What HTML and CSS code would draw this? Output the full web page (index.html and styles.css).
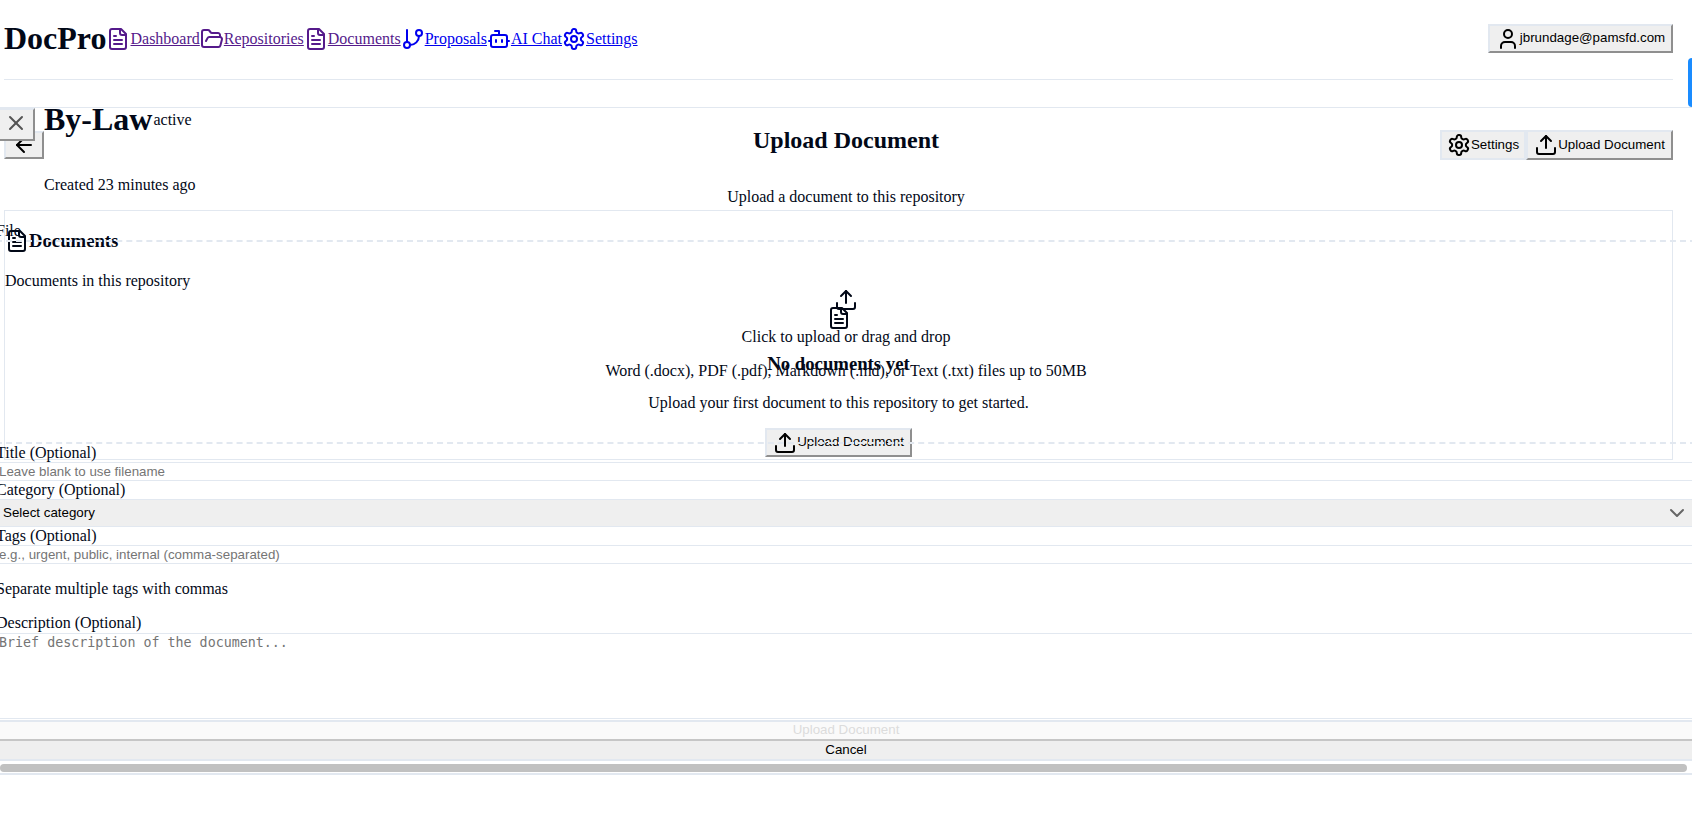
FILE: index.html
```html
<!DOCTYPE html>
<html lang="en">
<head>
  <meta charset="UTF-8" />
  <meta name="viewport" content="width=device-width, initial-scale=1.0" />
  <title>DocPro</title>
  <link rel="stylesheet" href="styles.css">
</head>
<body>
  <svg class="icon-defs" aria-hidden="true">
    <symbol id="i-file" viewBox="0 0 24 24"><path d="M15 2H6a2 2 0 0 0-2 2v16a2 2 0 0 0 2 2h12a2 2 0 0 0 2-2V7Z"/><path d="M14 2v4a2 2 0 0 0 2 2h4"/><path d="M10 9H8"/><path d="M16 13H8"/><path d="M16 17H8"/></symbol>
    <symbol id="i-folder" viewBox="0 0 24 24"><path d="m6 14 1.5-2.9A2 2 0 0 1 9.24 10H20a2 2 0 0 1 1.94 2.5l-1.54 6a2 2 0 0 1-1.95 1.5H4a2 2 0 0 1-2-2V5a2 2 0 0 1 2-2h3.9a2 2 0 0 1 1.69.9l.81 1.2a2 2 0 0 0 1.67.9H18a2 2 0 0 1 2 2v2"/></symbol>
    <symbol id="i-branch" viewBox="0 0 24 24"><line x1="6" x2="6" y1="3" y2="15"/><circle cx="18" cy="6" r="3"/><circle cx="6" cy="18" r="3"/><path d="M18 9a9 9 0 0 1-9 9"/></symbol>
    <symbol id="i-bot" viewBox="0 0 24 24"><path d="M12 8V4H8"/><rect width="16" height="12" x="4" y="8" rx="2"/><path d="M2 14h2"/><path d="M20 14h2"/><path d="M15 13v2"/><path d="M9 13v2"/></symbol>
    <symbol id="i-gear" viewBox="0 0 24 24"><path d="M12.22 2h-.44a2 2 0 0 0-2 2v.18a2 2 0 0 1-1 1.73l-.43.25a2 2 0 0 1-2 0l-.15-.08a2 2 0 0 0-2.73.73l-.22.38a2 2 0 0 0 .73 2.73l.15.1a2 2 0 0 1 1 1.72v.51a2 2 0 0 1-1 1.74l-.15.09a2 2 0 0 0-.73 2.73l.22.38a2 2 0 0 0 2.73.73l.15-.08a2 2 0 0 1 2 0l.43.25a2 2 0 0 1 1 1.73V20a2 2 0 0 0 2 2h.44a2 2 0 0 0 2-2v-.18a2 2 0 0 1 1-1.73l.43-.25a2 2 0 0 1 2 0l.15.08a2 2 0 0 0 2.73-.73l.22-.39a2 2 0 0 0-.73-2.73l-.15-.08a2 2 0 0 1-1-1.74v-.5a2 2 0 0 1 1-1.74l.15-.09a2 2 0 0 0 .73-2.73l-.22-.38a2 2 0 0 0-2.73-.73l-.15.08a2 2 0 0 1-2 0l-.43-.25a2 2 0 0 1-1-1.73V4a2 2 0 0 0-2-2z"/><circle cx="12" cy="12" r="3"/></symbol>
    <symbol id="i-user" viewBox="0 0 24 24"><path d="M19 21v-2a4 4 0 0 0-4-4H9a4 4 0 0 0-4 4v2"/><circle cx="12" cy="7" r="4"/></symbol>
    <symbol id="i-upload" viewBox="0 0 24 24"><path d="M21 15v4a2 2 0 0 1-2 2H5a2 2 0 0 1-2-2v-4"/><polyline points="17 8 12 3 7 8"/><line x1="12" x2="12" y1="3" y2="15"/></symbol>
    <symbol id="i-back" viewBox="0 0 24 24"><path d="m12 19-7-7 7-7"/><path d="M19 12H5"/></symbol>
    <symbol id="i-close" viewBox="0 0 24 24"><path d="M18 6 6 18"/><path d="m6 6 12 12"/></symbol>
    <symbol id="i-chevron" viewBox="0 0 24 24"><path d="m6 9 6 6 6-6"/></symbol>
  </svg>

  <div class="page">
    <header class="topbar">
      <h1 class="logo">DocPro</h1>
      <nav class="nav">
        <a class="nav-link visited" href="#"><svg class="icon"><use href="#i-file"/></svg>Dashboard</a>
        <a class="nav-link visited" href="#"><svg class="icon"><use href="#i-folder"/></svg>Repositories</a>
        <a class="nav-link visited" href="#"><svg class="icon"><use href="#i-file"/></svg>Documents</a>
        <a class="nav-link" href="#"><svg class="icon"><use href="#i-branch"/></svg>Proposals</a>
        <a class="nav-link" href="#"><svg class="icon"><use href="#i-bot"/></svg>AI Chat</a>
        <a class="nav-link" href="#"><svg class="icon"><use href="#i-gear"/></svg>Settings</a>
      </nav>
      <button class="btn user-btn"><svg class="icon"><use href="#i-user"/></svg><span>jbrundage@pamsfd.com</span></button>
    </header>

    <section class="repo-head">
      <button class="btn back-btn"><svg class="icon"><use href="#i-back"/></svg></button>
      <div class="repo-title">
        <div class="repo-name">
          <h1>By-Law</h1>
          <span>active</span>
        </div>
        <p>Created 23 minutes ago</p>
      </div>
      <div class="repo-actions">
        <button class="btn btn-outline"><svg class="icon"><use href="#i-gear"/></svg><span>Settings</span></button>
        <button class="btn"><svg class="icon"><use href="#i-upload"/></svg><span>Upload Document</span></button>
      </div>
    </section>

    <section class="card">
      <div class="card-title">
        <svg class="icon"><use href="#i-file"/></svg>
        <h3>Documents</h3>
      </div>
      <p class="card-sub">Documents in this repository</p>
      <div class="empty">
        <svg class="icon"><use href="#i-file"/></svg>
        <h3>No documents yet</h3>
        <p>Upload your first document to this repository to get started.</p>
        <button class="btn"><svg class="icon"><use href="#i-upload"/></svg><span>Upload Document</span></button>
      </div>
    </section>
  </div>

  <div class="side-tab"></div>

  <div class="modal">
    <button class="btn close-btn"><svg class="icon"><use href="#i-close"/></svg></button>
    <h2>Upload Document</h2>
    <p class="modal-sub">Upload a document to this repository</p>

    <form class="upload-form">
      <label>File</label>
      <div class="dropzone">
        <svg class="icon"><use href="#i-upload"/></svg>
        <p>Click to upload or drag and drop</p>
        <p>Word (.docx), PDF (.pdf), Markdown (.md), or Text (.txt) files up to 50MB</p>
      </div>

      <label>Title (Optional)</label>
      <input type="text" placeholder="Leave blank to use filename" />

      <label>Category (Optional)</label>
      <div class="select-wrap">
        <select>
          <option>Select category</option>
        </select>
        <svg class="icon chevron"><use href="#i-chevron"/></svg>
      </div>

      <label>Tags (Optional)</label>
      <input type="text" placeholder="e.g., urgent, public, internal (comma-separated)" />
      <p class="hint">Separate multiple tags with commas</p>

      <label>Description (Optional)</label>
      <textarea placeholder="Brief description of the document..."></textarea>
    </form>

    <div class="modal-actions">
      <button class="btn submit-btn" disabled><span>Upload Document</span></button>
      <button class="btn cancel-btn"><span>Cancel</span></button>
    </div>
    <div class="scroll-thumb"></div>
  </div>
</body>
</html>
```

FILE: styles.css
```css
body {
  margin: 0;
  height: 819px;
  overflow: hidden;
  font-family: "Liberation Serif", serif;
  font-size: 16px;
  color: #020817;
  background: #fff;
}
h1, h2, h3, p {
  margin: 0;
}
.icon-defs {
  display: none;
}
.icon {
  width: 24px;
  height: 24px;
  flex: none;
  fill: none;
  stroke: currentColor;
  stroke-width: 2;
  stroke-linecap: round;
  stroke-linejoin: round;
}

/* buttons keep the browser look, the reset css never loaded */
.btn {
  display: inline-flex;
  align-items: center;
  justify-content: center;
  box-sizing: border-box;
  padding: 0 6px;
  font-family: "Liberation Sans", Arial, sans-serif;
  font-size: 13.33px;
  white-space: nowrap;
  color: #000;
  background: #efefef;
  border: 2px solid;
  border-color: #e2e8f0 #8f8f8f #8f8f8f #e2e8f0;
}
.btn span {
  margin-bottom: 2px;
}

.page {
  padding: 0 19px 0 4px;
}
.topbar {
  display: flex;
  align-items: center;
  height: 77px;
  padding-bottom: 2px;
  border-bottom: 1px solid #e2e8f0;
}
.logo {
  font-size: 32px;
  line-height: 37px;
}
.nav {
  display: flex;
}
.nav-link {
  display: flex;
  align-items: center;
  color: #0000ee;
}
.nav-link.visited {
  color: #551a8b;
}
.user-btn {
  margin-left: auto;
  width: 185px;
  height: 29px;
}

.repo-head {
  display: flex;
  align-items: flex-start;
  padding-top: 21px;
  height: 108px;
  box-sizing: border-box;
  margin-bottom: 22px;
}
.back-btn {
  width: 40px;
  height: 28px;
  margin-top: 30px;
}
.repo-name {
  display: flex;
  align-items: center;
}
.repo-name h1 {
  font-size: 32px;
  line-height: 37px;
}
.repo-name span {
  margin-left: 1px;
}
.repo-title p {
  margin-top: 38px;
}
.repo-actions {
  display: flex;
  margin-left: auto;
  margin-top: 29px;
}
.repo-actions .btn {
  height: 30px;
}
.btn-outline {
  width: 86px;
  border-color: #e2e8f0;
}
.repo-actions .btn:last-child {
  width: 147px;
}

.card {
  box-sizing: border-box;
  height: 250px;
  border: 1px solid #e2e8f0;
}
.card-title {
  display: flex;
  align-items: center;
  padding-top: 18px;
}
.card-title h3 {
  font-size: 18.72px;
}
.card-sub {
  margin-top: 19px;
}
.empty {
  display: flex;
  flex-direction: column;
  align-items: center;
  margin-top: 16px;
}
.empty h3 {
  margin-top: 23px;
  font-size: 18.72px;
}
.empty p {
  margin-top: 19px;
}
.empty .btn {
  width: 147px;
  height: 29px;
  margin-top: 16px;
}

.side-tab {
  position: absolute;
  top: 58px;
  right: 0;
  width: 4px;
  height: 49px;
  background: #1a8cff;
  border-radius: 4px 0 0 4px;
}

/* dialog sits open over the page, no backdrop or panel colour */
.modal {
  position: absolute;
  top: 107px;
  left: 0;
  width: 100%;
  height: 668px;
  box-sizing: border-box;
  overflow: hidden;
  border-top: 1px solid #e2e8f0;
  border-bottom: 2px solid #e2e8f0;
  text-align: center;
}
.close-btn {
  position: absolute;
  top: 0;
  left: -4px;
  width: 39px;
  height: 33px;
  padding-bottom: 3px;
  color: #555;
}
.modal h2 {
  margin-top: 18px;
  font-size: 24px;
  line-height: 28px;
}
.modal-sub {
  margin-top: 34px;
  line-height: 18px;
}
.upload-form {
  margin: 16px 0 0 -4px;
  text-align: left;
}
.upload-form label {
  display: block;
  height: 18px;
  line-height: 18px;
}
.dropzone {
  box-sizing: border-box;
  width: calc(100% + 4px);
  height: 204px;
  padding-top: 46px;
  border-top: 2px dashed #e2e8f0;
  border-bottom: 2px dashed #e2e8f0;
  text-align: center;
}
.dropzone .icon {
  display: block;
  margin: 0 auto;
}
.dropzone p {
  margin-top: 16px;
  line-height: 18px;
}
.upload-form input,
.upload-form textarea {
  display: block;
  box-sizing: border-box;
  width: calc(100% + 4px);
  margin: 0;
  padding: 1px 3px;
  background: transparent;
  border: 1px solid #e2e8f0;
  border-width: 1px 0;
  font-family: "Liberation Sans", Arial, sans-serif;
  font-size: 13.33px;
  outline: none;
}
.upload-form input {
  height: 19px;
}
.upload-form textarea {
  height: 86px;
  margin-top: 1px;
  font-family: "DejaVu Sans Mono", monospace;
  resize: none;
}
.select-wrap {
  position: relative;
}
.select-wrap select {
  display: block;
  box-sizing: border-box;
  width: calc(100% + 4px);
  height: 28px;
  padding: 0 7px 2px;
  appearance: none;
  background: #efefef;
  border: 1px solid #e2e8f0;
  border-width: 1px 0;
  border-radius: 0;
  font-family: "Liberation Sans", Arial, sans-serif;
  font-size: 13.33px;
  color: #000;
}
.chevron {
  position: absolute;
  top: 2px;
  right: 3px;
  color: #666;
}
.hint {
  margin: 16px 0;
  line-height: 18px;
}
.modal-actions {
  display: flex;
  flex-direction: column;
  margin-top: 1px;
}
.modal-actions .btn {
  width: 100%;
}
.submit-btn {
  height: 21px;
  border-left: 0;
  border-right: 0;
  border-bottom-color: #c6c6c6;
  background: #fafafa;
  color: #dcdcdc;
}
.cancel-btn {
  height: 20px;
  border-width: 0 0 2px;
  border-bottom-color: #e2e8f0;
}
.scroll-thumb {
  width: calc(100% - 5px);
  height: 8px;
  margin-top: 3px;
  background: #c1c1c1;
  border-radius: 4px;
}
```
